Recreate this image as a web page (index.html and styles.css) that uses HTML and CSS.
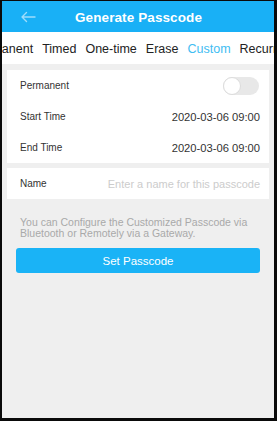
FILE: index.html
```html
<!DOCTYPE html>
<html>
<head>
<meta charset="utf-8">
<link rel="stylesheet" href="styles.css">
</head>
<body>
<div class="frame">
  <div class="screen">
    <header class="appbar">
      <svg class="back" width="16" height="12" viewBox="0 0 16 12"><path d="M15 6H2M6.5 1.5L2 6l4.5 4.5" fill="none" stroke="#9fdcfb" stroke-width="1.4" stroke-linecap="round" stroke-linejoin="round"/></svg>
      <h1 class="title">Generate Passcode</h1>
    </header>
    <nav class="tabs">
      <div class="tabs-track">
        <span class="tab">Permanent</span>
        <span class="tab">Timed</span>
        <span class="tab">One-time</span>
        <span class="tab">Erase</span>
        <span class="tab active">Custom</span>
        <span class="tab">Recurring</span>
      </div>
    </nav>
    <main class="content">
      <section class="card">
        <div class="row">
          <span class="label">Permanent</span>
          <span class="switch"><span class="knob"></span></span>
        </div>
        <div class="row">
          <span class="label">Start Time</span>
          <span class="value">2020-03-06 09:00</span>
        </div>
        <div class="row">
          <span class="label">End Time</span>
          <span class="value">2020-03-06 09:00</span>
        </div>
      </section>
      <section class="card">
        <div class="row">
          <span class="label">Name</span>
          <span class="placeholder">Enter a name for this passcode</span>
        </div>
      </section>
      <p class="help">You can Configure the Customized Passcode via Bluetooth or Remotely via a Gateway.</p>
      <button class="btn">Set Passcode</button>
    </main>
  </div>
</div>
</body>
</html>
```
FILE: styles.css
```css
html, body {
  margin: 0;
  padding: 0;
  background: #000;
}
body {
  font-family: "Liberation Sans", Arial, sans-serif;
}
.frame {
  width: 277px;
  height: 421px;
  box-sizing: border-box;
  border-style: solid;
  border-color: #0a0a0a;
  border-width: 1px 3px 3px 2px;
  overflow: hidden;
}
.screen {
  height: 100%;
  background: #efefef;
  display: flex;
  flex-direction: column;
}
.appbar {
  height: 31px;
  background: #19b0f6;
  display: flex;
  align-items: center;
  justify-content: center;
  position: relative;
}
.back {
  position: absolute;
  left: 18px;
  top: 10px;
}
.title {
  margin: 0 0 0 1px;
  padding-top: 2px;
  color: #fff;
  font-size: 13.5px;
  font-weight: bold;
  letter-spacing: 0.1px;
}
.tabs {
  height: 32px;
  background: #fff;
  overflow: hidden;
  position: relative;
}
.tabs-track {
  display: flex;
  gap: 9px;
  margin-left: -30px;
  white-space: nowrap;
  height: 100%;
  align-items: center;
}
.tab {
  font-size: 12.5px;
  color: #222;
  position: relative;
  padding-top: 1px;
}
.tab.active {
  color: #3fbdf2;
}
.tab.active::after {
  content: "";
  position: absolute;
  left: 50%;
  margin-left: -3px;
  top: 28px;
  width: 8px;
  height: 2px;
  background: #3fbdf2;
}
.content {
  padding: 6px 5px 0 5px;
  display: flex;
  flex-direction: column;
}
.card {
  background: #fff;
  margin-bottom: 5px;
}
.row {
  height: 31px;
  display: flex;
  align-items: center;
  justify-content: space-between;
  padding: 0 9px 0 13px;
}
.label {
  font-size: 10px;
  color: #333;
}
.value {
  font-size: 11.2px;
  color: #333;
}
.placeholder {
  font-size: 11px;
  color: #cccccc;
}
.switch {
  width: 36px;
  height: 18px;
  border-radius: 9px;
  background: #e8e8e8;
  position: relative;
  margin-right: 1px;
}
.knob {
  position: absolute;
  left: 0;
  top: 0;
  width: 16px;
  height: 16px;
  border-radius: 50%;
  background: #fff;
  border: 1px solid #dcdcdc;
}
.help {
  margin: 13px 8px 0 13px;
  font-size: 10.5px;
  line-height: 11px;
  color: #a9a9a9;
}
.btn {
  margin: 9px 9px 0 9px;
  height: 25px;
  border: 0;
  border-radius: 3px;
  background: #1ab3f6;
  color: #fff;
  font-family: "Liberation Sans", Arial, sans-serif;
  font-size: 11.5px;
}
```
